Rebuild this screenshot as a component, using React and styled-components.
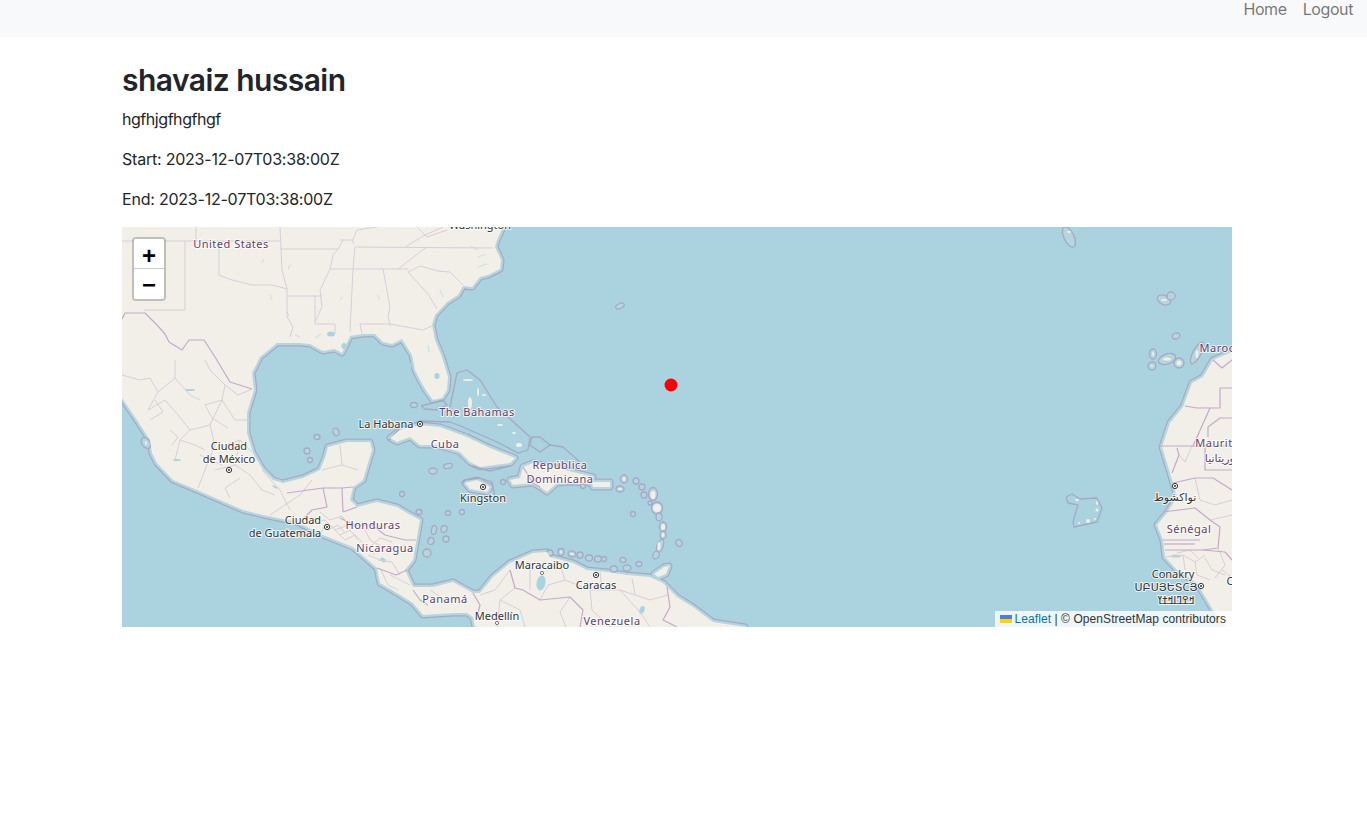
import React from 'react';
import styled, { createGlobalStyle } from 'styled-components';

const GlobalStyle = createGlobalStyle`
  html, body {
    margin: 0;
    padding: 0;
    background: #fff;
  }

  body {
    font-family: Inter, "Liberation Sans", sans-serif;
    font-size: 16px;
    line-height: 1.5;
    letter-spacing: -0.22px;
    color: #212529;
  }
`;

// all map data is in page pixels, the svg viewBox starts at the map's corner
const LAND = [
  // north + central + south america as one mass
  'M122 227 503 227 497 240 495 247 501 260 500 269 488 275 480 277 472 287 463 286 458 295 447 302 435 315 432 325 435 340 442 357 448 377 447 390 442 398 433 400 427 392 420 380 415 370 412 355 402 339 392 344 383 342 375 334 363 334 350 336 345 347 342 353 335 349 323 351 310 344 300 343 277 343 260 357 252 373 254 390 247 413 247 433 253 453 263 470 273 480 283 483 303 478 320 470 325 458 328 447 347 442 370 442 372 450 368 463 363 480 353 487 350 500 357 507 377 502 397 507 407 513 420 520 417 537 413 560 405 570 413 587 433 587 453 582 473 593 480 593 493 577 510 563 533 553 547 552 550 557 573 563 587 570 607 572 627 575 650 577 663 583 677 597 693 607 713 622 745 627 475 627 473 617 467 613 453 613 423 615 413 603 397 593 380 583 377 568 353 547 323 535 297 522 263 515 243 510 220 500 197 490 173 480 157 463 152 453 150 440 137 420 122 398Z',
  // africa
  'M1232 352 1213 360 1203 377 1192 383 1183 407 1170 423 1162 447 1167 463 1173 483 1177 497 1167 513 1157 525 1163 540 1165 557 1177 570 1197 583 1213 610 1227 627 1232 627Z',
  // cuba
  'M390 438 400 430 420 425 440 427 467 437 490 448 515 458 510 463 480 467 470 462 460 452 437 445 420 445 410 437 397 442Z',
  // hispaniola
  'M510 480 520 478 523 467 533 463 557 468 573 472 593 477 590 483 570 482 557 483 547 492 540 487 533 483 513 485Z',
  // puerto rico, jamaica, trinidad
  'M592 482 610 482 610 487 593 487Z',
  'M465 483 477 480 490 487 487 492 470 489Z',
  'M654 574 664 567 669 566 666 574 658 577Z',
];

const RINGS = [
  [146, 443, 4, 6, -35], [317, 437, 3, 2.5, 0], [336, 432, 3, 4, -20], [307, 451, 3, 3, 0],
  [310, 460, 2.5, 2.5, 0], [402, 494, 2.5, 2.5, 0], [414, 405, 3.5, 2.5, 0], [433, 471, 4, 3, 0],
  [448, 466, 4.5, 2.5, -10], [448, 513, 2.5, 2.5, 0], [462, 512, 2.5, 2.5, 0], [434, 530, 2.5, 4.5, 10],
  [444, 529, 3, 3.5, 20], [431, 541, 3, 3.5, 15], [446, 539, 3, 3, 0], [427, 553, 4, 4, 0],
  [419, 512, 3, 2.5, 0], [503, 482, 2.5, 2.5, 0], [583, 486, 2.5, 2.5, 0], [624, 479, 3.5, 4, 0],
  [620, 489, 4, 3, 0], [636, 481, 3, 3, 0], [642, 487, 3, 3, 0], [644, 495, 3, 3, 0],
  [653, 494, 4.5, 6.5, 0], [650, 503, 2, 2, 0], [657, 508, 5.5, 6, 0], [659, 517, 3, 4, 0],
  [663, 527, 3.5, 5, 0], [663, 535, 3, 4, 0], [660, 546, 3, 7, 20], [656, 555, 3, 4, 25],
  [633, 514, 2.5, 2.5, 0], [679, 543, 3, 3.5, -20], [550, 553, 3, 3, 0], [561, 552, 3, 3.5, 0],
  [572, 554, 4, 3, 20], [580, 555, 3, 3, 0], [589, 558, 3.5, 3, 0], [598, 559, 3.5, 3, 0],
  [604, 559, 2.5, 2.5, 0], [623, 560, 3, 2.5, 15], [614, 569, 3.5, 3, 0], [627, 568, 4, 3, 0],
  [639, 564, 3, 2.5, 0], [620, 306, 4.5, 2.5, -25], [1153, 354, 3.5, 5, 0], [1152, 366, 4, 4, 0],
  [1167, 359, 9, 5, -20], [1179, 363, 5, 5, 0], [1197, 353, 4, 12, 28], [1176, 336, 4, 3, -15],
  [1164, 300, 7, 4.5, 25], [1171, 296, 4, 4, 0], [1069, 237, 5, 11, -25],
];

// tiny bits of land inside the zones and rings
const ISLETS = [
  [1167, 359, 4, 1.5], [1179, 363, 2.5, 2.5], [1197, 354, 1.5, 4], [1153, 354, 1, 2], [1152, 366, 1, 1],
  [1164, 300, 3, 1], [1069, 232, 2, 1], [1077, 500, 2, 1], [1097, 503, 1, 2], [1097, 510, 1.5, 1.5], [1079, 523, 1, 1],
  [1088, 521, 2, 2], [1095, 519, 1, 1], [653, 495, 2.5, 4], [657, 508, 4, 4], [663, 527, 2, 3], [663, 535, 1.5, 2],
  [659, 546, 1.5, 4], [624, 479, 1.5, 2], [620, 489, 2, 1], [572, 554, 2, 1], [561, 552, 1, 1.5], [146, 443, 1, 2],
  [468, 380, 5, 1], [478, 392, 1, 4], [470, 403, 2, 6], [484, 395, 2, 1], [500, 425, 3, 1], [514, 433, 2, 1], [519, 445, 3, 2],
];

const ZONES = [
  'M450 407 457 373 467 370 480 380 497 407 530 437 528 450 518 453 497 442 463 427 450 422 420 421 400 428 388 441',
  'M532 437 540 437 550 445 540 452 530 445 532 437',
  'M550 445 563 447 580 462',
  'M1066 497 1072 494 1080 499 1097 498 1102 508 1097 522 1074 527 1073 522 1078 505 1068 503 1066 497',
  'M421 406 432 403 443 400 447 405 437 410 425 409 421 406',
  'M462 485 465 480 480 478 492 482 495 497',
  'M472 466 490 471 510 466',
];

const COUNTRY_LINES = [
  'M122 319 125 313 145 313 157 325 165 334 169 342 182 350 189 340 204 340 215 357 230 382 252 389',
  'M287 493 323 488 342 488 343 512', 'M323 488 327 507 312 510 300 522',
  'M342 488 353 487', 'M343 512 357 507', 'M340 518 355 525 372 525 385 535 405 540 416 540',
  'M377 568 396 575 407 570', 'M413 590 420 600 428 605',
  'M510 570 515 588 523 590 540 600 570 597 583 610 580 627',
  'M667 587 670 607 663 620 677 627', 'M473 593 480 605 477 617',
  'M523 467 533 483 540 487',
  'M1160 446 1193 446 1210 408 1220 408 1220 388 1232 388',
  'M1185 406 1197 408 1210 408', 'M1208 437 1208 427 1220 418 1232 418',
  'M1163 512 1195 508 1210 520 1220 527 1218 548 1203 550 1165 550',
  'M1163 540 1200 540', 'M1164 544 1195 544', 'M1203 550 1225 552 1232 560',
  'M1193 446 1232 446', 'M1205 446 1205 470 1232 470', 'M1172 473 1179 455 1177 448',
  'M1173 483 1195 478 1213 478 1232 490', 'M1232 360 1222 368 1213 360',
];

const STATE_LINES = [
  'M122 241 185 241 185 310 144 310', 'M196 227 196 241', 'M185 241 280 241', 'M219 241 219 275 232 280 252 285 272 285 287 289',
  'M280 227 282 270 287 289 287 317 293 327 290 337', 'M287 296 322 296', 'M280 249 338 249',
  'M343 240 338 249 333 255 330 269 320 290 322 307 315 322', 'M315 324 335 324 335 334',
  'M330 269 408 269', 'M355 247 493 248', 'M427 247 420 252 398 269', 'M355 247 353 269 350 332',
  'M383 269 390 307 388 317 390 326', 'M360 324 390 324 423 330 432 326', 'M360 324 362 334',
  'M408 272 420 266 438 271 450 272 463 285', 'M408 272 428 294 437 309', 'M340 240 353 240 357 230 377 227',
  'M417 227 427 237 447 230', 'M405 247 425 235 443 227', 'M315 324 315 296',
  // mexico
  'M122 375 140 380 150 378 158 392 175 378', 'M175 360 175 378 190 395 200 400', 'M205 360 210 370 225 385 222 400 205 405',
  'M148 410 165 400 178 415 190 430 180 440 175 460', 'M190 430 210 425 222 400', 'M222 400 235 420 250 420',
  'M210 425 215 445 205 470 198 488', 'M240 440 235 465 250 475 262 490 275 495', 'M235 465 215 470',
  'M262 470 280 490 290 510', 'M180 440 195 445 205 450', 'M200 455 222 465', 'M158 392 148 410', 'M252 389 238 395 225 385',
  'M340 445 342 465 358 470', 'M342 465 322 470', 'M300 495 285 505 270 515', 'M300 495 312 480',
  'M170 430 178 437 172 445', 'M155 400 163 412 150 420', 'M205 405 212 418 228 428', 'M225 445 240 440 252 452', 'M240 478 225 488 230 498',
  // central america
  'M320 512 330 520 342 516 348 525 335 530', 'M312 522 325 520 335 530', 'M325 525 320 535', 'M335 530 345 540 355 535 365 545',
  'M350 525 365 530 385 525', 'M365 530 370 540 388 550 405 545', 'M355 535 375 555', 'M378 560 392 562 400 575',
  'M380 568 388 585 398 590', 'M390 575 410 585', 'M430 590 445 600 460 598',
  'M328 530 338 525 345 533', 'M340 535 350 530 358 540', 'M345 545 355 550 365 548', 'M372 545 380 538 392 542', 'M368 555 380 560',
  // venezuela + colombia
  'M540 600 548 585 565 580 590 590 620 590 650 600 668 595', 'M590 590 592 610 610 627', 'M620 590 640 612 650 627',
  'M510 570 495 590 480 595', 'M515 588 500 600 497 627', 'M500 600 520 610 525 627', 'M530 563 530 590', 'M565 580 560 565',
  'M600 572 602 590', 'M632 578 635 595', 'M570 597 560 612 566 627',
  // west africa
  'M1165 557 1183 555 1195 562 1205 555', 'M1183 555 1185 570', 'M1195 562 1197 575 1210 580', 'M1218 548 1225 565 1215 578',
  'M1210 520 1232 515', 'M1179 455 1185 462 1192 446', 'M1195 478 1200 500 1215 505', 'M1215 505 1232 500', 'M1222 570 1232 578',
  'M1205 558 1212 570 1225 575', 'M1177 553 1190 550 1198 558',
];

const LAKES = [
  [541, 583, 4.5, 7.5, 10], [437, 376, 2.5, 3, 0], [190, 390, 5, 1, 0], [642, 610, 2.5, 4, 20],
  [383, 560, 3, 2, 30], [331, 334, 4, 2.5, 0], [344, 346, 2.5, 3, 0],
  [177, 460, 4, 1, 0], [275, 487, 3, 1, 30], [410, 366, 1.5, 3, 0], [1176, 556, 5, 1.5, 0],
];

const STREAMS = [
  'M470 246 478 250', 'M486 254 478 257', 'M487 264 478 267', 'M440 290 443 297', 'M340 300 343 297',
  'M380 300 378 295', 'M288 270 290 265', 'M270 295 272 300', 'M287 312 289 316', 'M262 263 264 259',
  'M352 240 354 244', 'M428 345 429 352', 'M295 335 300 337', 'M315 338 321 334',
];

const CITY_DOTS = [
  [420, 424], [229, 470], [483, 487], [327, 527], [596, 575], [1175, 486], [1201, 586],
];

const LABELS = [
  { text: 'Washington', x: 480, y: 229, city: true },
  { text: 'United States', x: 231, y: 248 },
  { text: 'The Bahamas', x: 477, y: 416 },
  { text: 'La Habana', x: 386, y: 428, city: true },
  { text: 'Cuba', x: 445, y: 448 },
  { text: 'Ciudad', x: 229, y: 450, city: true },
  { text: 'de México', x: 229, y: 463, city: true },
  { text: 'República', x: 560, y: 469 },
  { text: 'Dominicana', x: 560, y: 483 },
  { text: 'Kingston', x: 483, y: 502, city: true },
  { text: 'Ciudad', x: 303, y: 524, city: true },
  { text: 'de Guatemala', x: 285, y: 537, city: true },
  { text: 'Honduras', x: 373, y: 529 },
  { text: 'Nicaragua', x: 385, y: 552 },
  { text: 'Panamá', x: 445, y: 603 },
  { text: 'Medellín', x: 497, y: 620, city: true },
  { text: 'Maracaibo', x: 542, y: 569, city: true },
  { text: 'Caracas', x: 596, y: 589, city: true },
  { text: 'Venezuela', x: 612, y: 625 },
  { text: 'Maroc', x: 1217, y: 352 },
  { text: 'Mauritanie', x: 1226, y: 447 },
  { text: 'موريتانيا', x: 1223, y: 462 },
  { text: 'نواكشوط', x: 1175, y: 501, city: true },
  { text: 'Sénégal', x: 1189, y: 533 },
  { text: 'Conakry', x: 1173, y: 578, city: true },
  { text: 'ՍԲՍՅԵՏCՅ', x: 1166, y: 591, city: true },
  { text: 'ߞߐߣߊߞߙߌ', x: 1176, y: 604, city: true },
  { text: 'C', x: 1230, y: 585, city: true },
];

const Navbar = styled.nav`
  display: flex;
  justify-content: flex-end;
  gap: 16px;
  height: 37px;
  padding-right: 14px;
  background: #f8f9fa;
`;

const NavLink = styled.a`
  line-height: 18px;
  letter-spacing: -0.4px;
  color: rgba(0, 0, 0, 0.55);
  text-decoration: none;
`;

const Main = styled.main`
  padding: 24px 135px 0 122px;
`;

const Title = styled.h1`
  margin: 0 0 8px;
  font-size: 30px;
  font-weight: 600;
  line-height: 38.4px;
  letter-spacing: -0.55px;
`;

const Text = styled.p`
  margin: 0 0 16px;
  letter-spacing: ${(p) => (p.$tight ? '-0.45px' : 'inherit')};
`;

const MapBox = styled.div`
  position: relative;
  height: 400px;
  overflow: hidden;
  background: #aad3df;
  letter-spacing: 0;
`;

const MapSvg = styled.svg`
  display: block;
  width: 100%;
  height: 100%;
`;

const Halo = styled.path`
  fill: ${(p) => p.$fill};
  stroke: ${(p) => p.$stroke};
  stroke-width: ${(p) => p.$width}px;
  stroke-linejoin: round;
`;

const Ring = styled.ellipse`
  fill: #b6d6de;
  stroke: #a6a9c4;
  stroke-width: 1.3px;
`;

const Border = styled.path`
  fill: none;
  stroke: ${(p) => (p.$country ? '#c4aac9' : '#d9cdd8')};
  stroke-width: ${(p) => (p.$country ? 1.2 : 1)}px;
  stroke-linejoin: round;
`;

const Zone = styled.path`
  fill: none;
  stroke: #a6a9c4;
  stroke-width: 1.3px;
  stroke-linejoin: round;
`;

const Stream = styled.path`
  fill: none;
  stroke: #c4e0e6;
  stroke-width: 1px;
`;

const MapLabel = styled.text`
  font-family: "Noto Sans", "DejaVu Sans", sans-serif;
  font-size: 11px;
  letter-spacing: ${(p) => (p.$city ? 0 : 0.5)}px;
  text-anchor: middle;
  fill: ${(p) => (p.$city ? '#333' : '#5f3f6b')};
  stroke: rgba(255, 255, 255, 0.75);
  stroke-width: 2px;
  paint-order: stroke;
`;

const ZoomControl = styled.div`
  position: absolute;
  top: 10px;
  left: 10px;
  width: 30px;
  border: 2px solid rgba(0, 0, 0, 0.2);
  border-radius: 4px;
  background-clip: padding-box;
`;

const ZoomButton = styled.a`
  display: block;
  height: ${(p) => (p.$last ? 30 : 29)}px;
  text-align: center;
  background: #fff;
  color: #000;
  font: bold 24px/${(p) => (p.$last ? 31 : 33)}px "Liberation Sans", sans-serif;
  border-bottom: ${(p) => (p.$last ? 'none' : '1px solid #ccc')};
  border-radius: ${(p) => (p.$last ? '0 0 2px 2px' : '2px 2px 0 0')};
`;

const Attribution = styled.div`
  position: absolute;
  right: 0;
  bottom: 0;
  display: flex;
  align-items: center;
  height: 16px;
  padding: 0 6px 0 5px;
  background: rgba(255, 255, 255, 0.8);
  font-family: "Liberation Sans", sans-serif;
  font-size: 12px;
  line-height: 16px;
  letter-spacing: 0.07px;
  color: #333;
  white-space: pre;
`;

const AttributionLink = styled.a`
  color: #0078a8;
  text-decoration: none;
`;

const Flag = styled.svg`
  width: 12px;
  height: 8px;
  margin-right: 3px;
`;

function MapArt() {
  return (
    <MapSvg viewBox="122 227 1110 400">
      {LAND.map((d) => <Halo key={d} d={d} $fill="#a6a9c4" $stroke="#a6a9c4" $width={7} />)}
      {LAND.map((d) => <Halo key={d} d={d} $fill="#b6d6de" $stroke="#b6d6de" $width={4.6} />)}
      {RINGS.map(([cx, cy, rx, ry, rot]) => (
        <Ring key={`${cx}-${cy}`} cx={cx} cy={cy} rx={rx} ry={ry} transform={`rotate(${rot} ${cx} ${cy})`} />
      ))}
      {ZONES.map((d) => <Zone key={d} d={d} />)}
      {LAND.map((d) => <Halo key={d} d={d} $fill="#f2efe9" $stroke="none" $width={0} />)}
      {ISLETS.map(([cx, cy, rx, ry]) => (
        <ellipse key={`${cx}-${cy}`} cx={cx} cy={cy} rx={rx} ry={ry} fill="#f2efe9" />
      ))}
      {STREAMS.map((d) => <Stream key={d} d={d} />)}
      {LAKES.map(([cx, cy, rx, ry, rot]) => (
        <ellipse key={`${cx}-${cy}`} cx={cx} cy={cy} rx={rx} ry={ry} fill="#aad3df" transform={`rotate(${rot} ${cx} ${cy})`} />
      ))}
      {STATE_LINES.map((d) => <Border key={d} d={d} />)}
      {COUNTRY_LINES.map((d) => <Border key={d} d={d} $country />)}
      {CITY_DOTS.map(([cx, cy]) => (
        <g key={`${cx}-${cy}`}>
          <circle cx={cx} cy={cy} r="2.6" fill="#fff" stroke="#333" strokeWidth="1" />
          <circle cx={cx} cy={cy} r="1" fill="#333" />
        </g>
      ))}
      <circle cx="542" cy="573" r="1.6" fill="#fff" stroke="#444" strokeWidth="0.7" />
      <circle cx="497" cy="623" r="1.6" fill="#fff" stroke="#444" strokeWidth="0.7" />
      {LABELS.map((l) => (
        <MapLabel key={`${l.text}-${l.x}`} x={l.x} y={l.y} $city={l.city}>{l.text}</MapLabel>
      ))}
      <circle cx="671" cy="385" r="6.5" fill="#ff0000" />
    </MapSvg>
  );
}

export default function App() {
  return (
    <>
      <GlobalStyle />
      <Navbar>
        <NavLink href="#">Home</NavLink>
        <NavLink href="#">Logout</NavLink>
      </Navbar>
      <Main>
        <Title>shavaiz hussain</Title>
        <Text $tight>hgfhjgfhgfhgf</Text>
        <Text>Start: 2023-12-07T03:38:00Z</Text>
        <Text>End: 2023-12-07T03:38:00Z</Text>
        <MapBox>
          <MapArt />
          <ZoomControl>
            <ZoomButton>+</ZoomButton>
            <ZoomButton $last>−</ZoomButton>
          </ZoomControl>
          <Attribution>
            <Flag viewBox="0 0 12 8">
              <rect width="12" height="4" fill="#4c7be1" />
              <rect y="4" width="12" height="4" fill="#ffd500" />
            </Flag>
            <AttributionLink href="#">Leaflet</AttributionLink>
            {' | © OpenStreetMap contributors'}
          </Attribution>
        </MapBox>
      </Main>
    </>
  );
}
